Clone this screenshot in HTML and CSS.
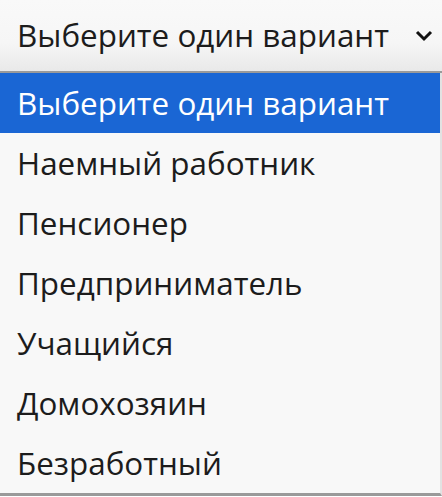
FILE: index.html
```html
<!DOCTYPE html>
<html lang="ru">
<head>
<meta charset="utf-8">
<link rel="stylesheet" href="styles.css">
</head>
<body>
<div class="select">
  <span class="value">Выберите один вариант</span>
  <svg class="chev" width="20" height="13" viewBox="0 0 20 13"><path d="M3 3 L10 10 L17 3" fill="none" stroke="#111" stroke-width="3"/></svg>
</div>
<ul class="list">
  <li class="opt active">Выберите один вариант</li>
  <li class="opt">Наемный работник</li>
  <li class="opt">Пенсионер</li>
  <li class="opt">Предприниматель</li>
  <li class="opt">Учащийся</li>
  <li class="opt">Домохозяин</li>
  <li class="opt">Безработный</li>
</ul>
</body>
</html>
```

FILE: styles.css
```css
html, body {
  margin: 0;
  padding: 0;
  background: #ffffff;
}
body {
  font-family: "Open Sans", "Noto Sans", sans-serif;
  font-size: 31.4px;
  color: #1c1c1c;
  width: 442px;
  height: 497px;
  overflow: hidden;
}
.select {
  height: 73px;
  box-sizing: border-box;
  display: flex;
  align-items: center;
  justify-content: space-between;
  padding: 0 8px 0 17px;
  background: linear-gradient(#f9f9f9 0%, #f6f6f6 60%, #e9e9e9 100%);
  border-bottom: 2px solid #9a9a9a;
}
.value {
  line-height: 1;
  margin-top: -2px;
}
.chev {
  margin-top: -1px;
}
.list {
  list-style: none;
  margin: 0;
  padding: 0;
  background: #f8f8f8;
  border-right: 2px solid #e2e2e2;
  border-bottom: 3px solid #9a9a9a;
  height: 423px;
  box-sizing: border-box;
}
.opt {
  height: 60px;
  display: flex;
  align-items: center;
  padding-left: 17px;
  line-height: 1;
}
.opt.active {
  background: #1a66d4;
  color: #ffffff;
}
```
